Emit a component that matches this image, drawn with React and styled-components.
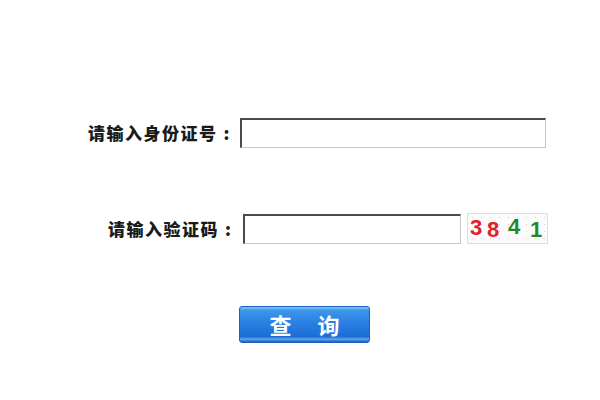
import React from 'react';
import styled, { createGlobalStyle } from 'styled-components';

const GlobalStyle = createGlobalStyle`
  html, body {
    margin: 0;
    padding: 0;
    background: #ffffff;
  }
  body {
    font-family: "Noto Sans CJK SC", "Liberation Sans", sans-serif;
  }
`;

const Page = styled.div`
  width: 600px;
  height: 400px;
  padding-top: 118px;
  box-sizing: border-box;
  display: flex;
  flex-direction: column;
`;

const Row = styled.div`
  display: flex;
  align-items: center;
  margin-left: ${(p) => p.indent}px;
  margin-bottom: ${(p) => p.gap}px;
`;

const Label = styled.label`
  display: flex;
  width: ${(p) => p.w}px;
  font-size: 17px;
  font-weight: 900;
  color: #1a1a1a;
  letter-spacing: 1.5px;
  line-height: 30px;
  white-space: nowrap;
`;

const Colon = styled.span`
  margin-left: 6px;
`;

const TextInput = styled.input`
  width: ${(p) => p.w}px;
  height: 30px;
  box-sizing: border-box;
  padding: 2px 4px;
  font-size: 14px;
  background: #fff;
  border-style: solid;
  border-width: 2px 1px 1px 2px;
  border-color: #4a4a4a #c8c8c8 #c8c8c8 #4a4a4a;
  outline: none;
`;

const Captcha = styled.div`
  width: 81px;
  height: 31px;
  margin-left: 6px;
  box-sizing: border-box;
  border: 1px solid #dedede;
  background-color: #fbfbfb;
  background-image: radial-gradient(#e4c8c8 0.6px, transparent 1px);
  background-size: 9px 7px;
  display: flex;
  align-items: center;
  padding-left: 2px;
  font-family: "Liberation Sans", Arial, sans-serif;
  font-size: 22px;
  font-weight: bold;
`;

const Digit = styled.span`
  color: ${(p) => p.color};
  width: ${(p) => p.w}px;
  position: relative;
  top: ${(p) => p.dy}px;
`;

const ButtonRow = styled.div`
  display: flex;
  margin-left: 239px;
`;

const QueryButton = styled.button`
  width: 131px;
  height: 37px;
  border: 1px solid #1b5fbf;
  border-radius: 3px;
  background: linear-gradient(
    to bottom,
    #79cbf6 0%,
    #3d95ea 10%,
    #2a80e2 45%,
    #1d6cd6 85%,
    #5fa8ee 92%,
    #1a5cc0 100%
  );
  color: #ffffff;
  font-family: "Noto Sans CJK SC", sans-serif;
  font-size: 22px;
  font-weight: bold;
  letter-spacing: 26px;
  padding: 0 0 0 26px;
  line-height: 33px;
  cursor: pointer;
`;

export default function App() {
  return (
    <>
      <GlobalStyle />
      <Page>
        <Row indent={88} gap={65}>
          <Label w={152}>请输入身份证号<Colon>:</Colon></Label>
          <TextInput w={306} />
        </Row>
        <Row indent={108} gap={62}>
          <Label w={135}>请输入验证码<Colon>:</Colon></Label>
          <TextInput w={218} />
          <Captcha>
            <Digit color="#e0202a" w={17} dy={-1}>3</Digit>
            <Digit color="#e0202a" w={21} dy={1}>8</Digit>
            <Digit color="#1f8a2a" w={22} dy={-2}>4</Digit>
            <Digit color="#1f8a2a" w={14} dy={1}>1</Digit>
          </Captcha>
        </Row>
        <ButtonRow>
          <QueryButton>查询</QueryButton>
        </ButtonRow>
      </Page>
    </>
  );
}
